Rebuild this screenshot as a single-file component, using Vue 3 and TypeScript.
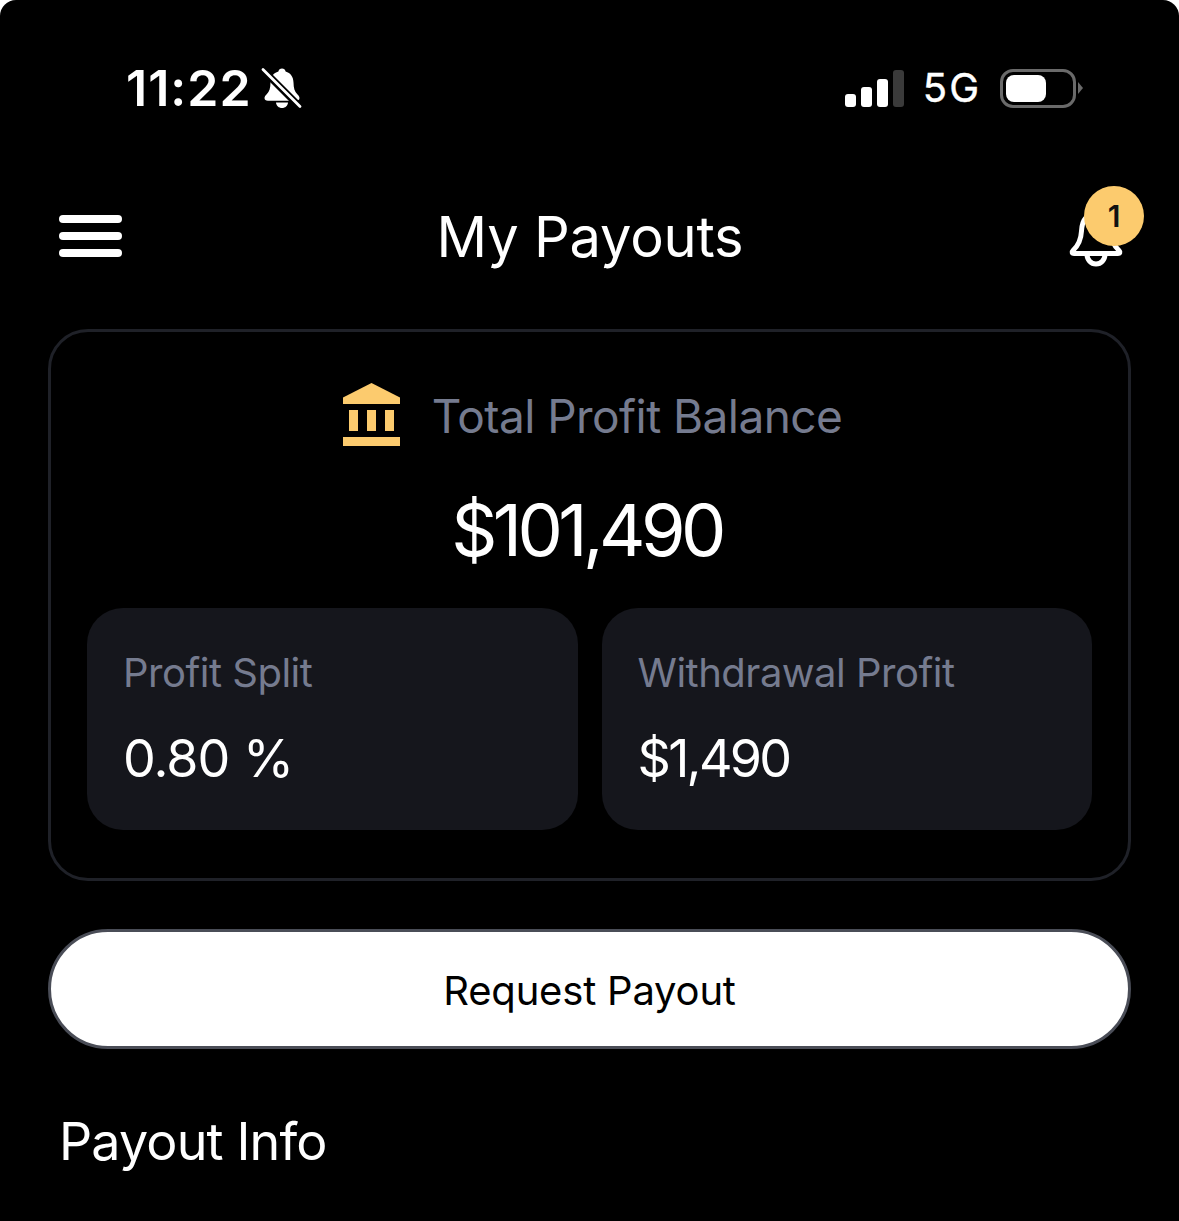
<template>
  <div class="screen">
    <!-- status bar -->
    <div class="status">
      <div class="status-left">
        <span class="clock">11:22</span>
        <svg class="mute" width="42" height="42" viewBox="0 0 42 42">
          <path d="M21 1.500c-1.900 0-3.300 1.300-3.600 3-5 1.400-7.800 5.400-7.900 11-.1 5.500-1 9-3.800 11.700-1.500 1.500-2.200 2.600-2.200 3.800 0 1.700 1.300 2.800 3.400 2.800h28.200c2.100 0 3.400-1.100 3.400-2.800 0-1.200-.7-2.300-2.200-3.800-2.800-2.700-3.700-6.200-3.800-11.700-.1-5.600-2.900-9.600-7.900-11-.3-1.700-1.700-3-3.600-3z" fill="#fff" />
          <path d="M15 35.500c.3 3.300 2.800 5.500 6 5.500s5.700-2.200 6-5.500z" fill="#fff" />
          <path d="M3 4l35 35" stroke="#000" stroke-width="7" />
          <path d="M2 2.500l37 37" stroke="#fff" stroke-width="2.800" stroke-linecap="round" />
        </svg>
      </div>
      <div class="status-right">
        <div class="signal">
          <i class="b1"></i><i class="b2"></i><i class="b3"></i><i class="b4"></i>
        </div>
        <span class="net">5G</span>
        <div class="battery"><div class="level" :style="{ width: batteryLevel + '%' }"></div></div>
        <div class="battery-cap"></div>
      </div>
    </div>

    <!-- header -->
    <div class="header">
      <div class="burger"><i></i><i></i><i></i></div>
      <h1 class="title">My Payouts</h1>
      <div class="bell-wrap">
        <svg class="bell" width="56" height="60" viewBox="0 0 56 60" fill="none" stroke="#fff" stroke-width="5" stroke-linejoin="round" stroke-linecap="round">
          <path d="M28 6C18 6 14 13 13.500 23c-.4 8-2.500 14-8.500 19.500-1.500 1.500-1 3 1 3h44c2 0 2.500-1.500 1-3-6-5.500-8.100-11.500-8.500-19.500C42 13 38 6 28 6z" />
          <path d="M19 46c0 6 4 10 9 10s9-4 9-10" />
        </svg>
        <span class="badge">1</span>
      </div>
    </div>

    <!-- balance card -->
    <div class="card">
      <div class="card-head">
        <svg width="58" height="64" viewBox="0 0 58 64" fill="#fccb6e">
          <path d="M0 14.500 28.500 0 57 14.500V21H0z" />
          <rect x="6" y="27" width="9" height="21" />
          <rect x="24" y="27" width="9" height="21" />
          <rect x="42" y="27" width="9" height="21" />
          <rect x="0" y="54" width="57" height="9" />
        </svg>
        <span class="card-label">Total Profit Balance</span>
      </div>
      <div class="balance">${{ balance }}</div>
      <div class="tiles">
        <div class="tile" v-for="t in tiles" :key="t.label">
          <div class="tile-label">{{ t.label }}</div>
          <div class="tile-value" :class="{ money: t.money }">{{ t.value }}</div>
        </div>
      </div>
    </div>

    <button class="request">Request Payout</button>

    <h2 class="info">Payout Info</h2>
  </div>
</template>

<script setup lang="ts">
const batteryLevel = 62;
const balance = "101,490";

const tiles = [
  { label: "Profit Split", value: "0.80 %", money: false },
  { label: "Withdrawal Profit", value: "$1,490", money: true },
];
</script>

<style>
html,
body {
  background: #fff;
  margin: 0;
}
</style>

<style scoped>
.screen {
  width: 1179px;
  height: 1221px;
  box-sizing: border-box;
  overflow: hidden;
  background: #000;
  border-radius: 16px 16px 0 0;
  color: #fff;
  font-family: Inter, "Liberation Sans", sans-serif;
  padding: 0 48px;
}

.status {
  display: flex;
  align-items: center;
  justify-content: space-between;
  height: 176px;
  padding: 0 48px 0 78px;
}

.status-left {
  display: flex;
  align-items: center;
  gap: 9px;
}

.clock {
  font-size: 50px;
  font-weight: 600;
  line-height: 60px;
  letter-spacing: 1px;
}

.status-right {
  display: flex;
  align-items: center;
}

.signal {
  display: flex;
  align-items: flex-end;
  gap: 5px;
  height: 38px;
}

.signal i {
  display: block;
  width: 11px;
  border-radius: 3px;
  background: #fff;
}

.signal .b1 { height: 13px; }
.signal .b2 { height: 20px; }
.signal .b3 { height: 28px; }
.signal .b4 { height: 37px; background: #3a3a3a; }

.net {
  margin-left: 19px;
  font-size: 40px;
  font-weight: 400;
  line-height: 46px;
  letter-spacing: 2px;
  -webkit-text-stroke: 0.4px #fff;
}

.battery {
  margin-left: 19px;
  box-sizing: border-box;
  width: 76px;
  height: 39px;
  border: 3px solid #6a6a6a;
  border-radius: 13px;
  padding: 3px;
}

.level {
  height: 100%;
  border-radius: 8px;
  background: #fff;
}

.battery-cap {
  margin-left: 2px;
  width: 0;
  height: 0;
  border-top: 6px solid transparent;
  border-bottom: 6px solid transparent;
  border-left: 5px solid #6a6a6a;
}

.header {
  display: grid;
  grid-template-columns: 1fr auto 1fr;
  align-items: center;
  height: 120px;
  padding: 0 10px 0 11px;
}

.burger {
  display: flex;
  flex-direction: column;
  gap: 9px;
  width: 63px;
}

.burger i {
  display: block;
  height: 8px;
  border-radius: 4px;
  background: #fff;
}

.title {
  margin: 0;
  padding-top: 2px;
  font-size: 56px;
  font-weight: 400;
  line-height: 68px;
  letter-spacing: -0.2px;
}

.bell-wrap {
  position: relative;
  justify-self: end;
  width: 60px;
  height: 60px;
}

.bell {
  position: absolute;
  left: 7px;
  top: 2px;
}

.badge {
  position: absolute;
  left: 23px;
  top: -20px;
  width: 60px;
  height: 60px;
  border-radius: 50%;
  background: #fccb6e;
  color: #111;
  font-size: 30px;
  font-weight: 600;
  line-height: 60px;
  text-align: center;
}

.card {
  box-sizing: border-box;
  height: 552px;
  margin-top: 33px;
  border: 3px solid #1f2128;
  border-radius: 40px;
  padding: 51px 36px 0;
}

.card-head {
  display: flex;
  align-items: center;
  justify-content: center;
  gap: 31px;
  height: 64px;
  padding-left: 6px;
}

.card-label {
  padding-top: 2px;
  font-size: 46px;
  line-height: 56px;
  letter-spacing: -0.55px;
  color: #757b8f;
}

.balance {
  margin-top: 39px;
  padding-right: 6px;
  text-align: center;
  font-size: 72px;
  line-height: 88px;
  letter-spacing: -4.6px;
}

.tiles {
  display: grid;
  grid-template-columns: 1fr 1fr;
  gap: 24px;
  margin-top: 34px;
}

.tile {
  height: 222px;
  box-sizing: border-box;
  border-radius: 36px;
  background: #15161c;
  padding: 41px 36px 0;
}

.tile-label {
  font-size: 40px;
  line-height: 48px;
  letter-spacing: -0.5px;
  color: #757b8f;
}

.tile-value {
  margin-top: 32px;
  font-size: 52px;
  line-height: 60px;
  letter-spacing: -1px;
}

.tile-value.money {
  letter-spacing: -2.7px;
}

.request {
  display: block;
  width: 100%;
  height: 120px;
  margin-top: 48px;
  padding-top: 4px;
  border: 3px solid #4a4d57;
  border-radius: 60px;
  background: #fff;
  color: #000;
  font-family: inherit;
  font-size: 40px;
  letter-spacing: -0.2px;
}

.info {
  margin: 61px 0 0 11px;
  font-size: 52px;
  font-weight: 400;
  line-height: 64px;
  letter-spacing: -0.85px;
}
</style>
